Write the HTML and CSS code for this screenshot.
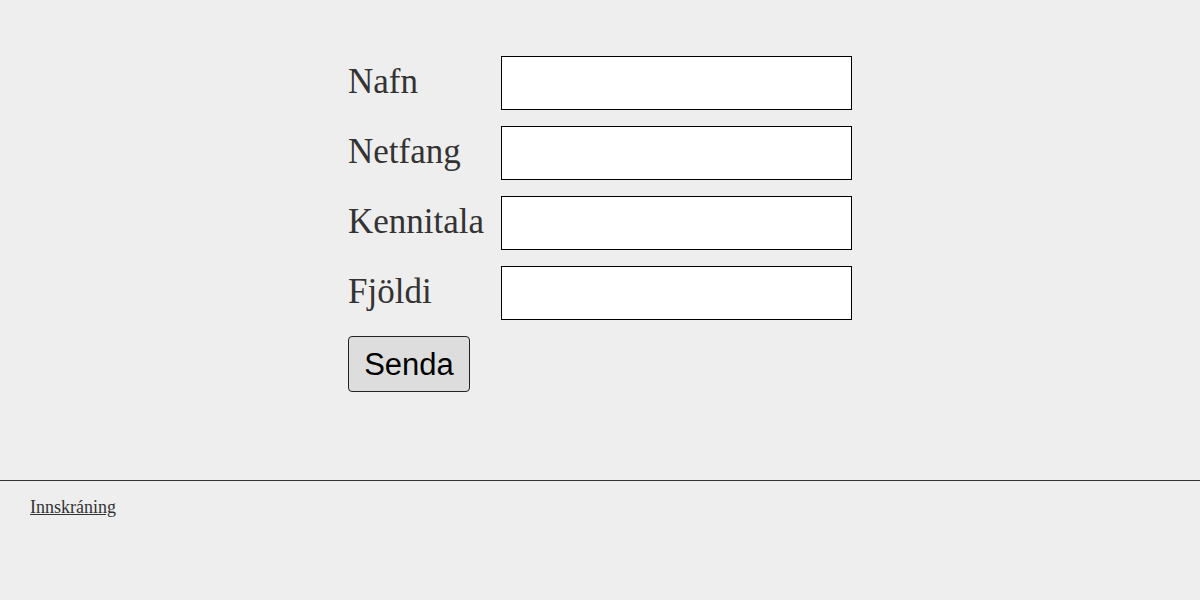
FILE: index.html
```html
<!DOCTYPE html>
<html lang="is">
<head>
<meta charset="utf-8">
<title>Skráning</title>
<link rel="stylesheet" href="styles.css">
</head>
<body>
<main class="main">
  <form class="form">
    <label class="label" for="nafn">Nafn</label>
    <input class="field" id="nafn" type="text">
    <label class="label" for="netfang">Netfang</label>
    <input class="field" id="netfang" type="email">
    <label class="label" for="kennitala">Kennitala</label>
    <input class="field" id="kennitala" type="text">
    <label class="label" for="fjoldi">Fjöldi</label>
    <input class="field" id="fjoldi" type="text">
    <div class="actions"><button class="button" type="button">Senda</button></div>
  </form>
</main>
<footer class="footer">
  <a class="link" href="#">Innskráning</a>
</footer>
</body>
</html>
```

FILE: styles.css
```css
html, body {
  margin: 0;
  background: #eee;
  color: #333;
  font-family: "Liberation Serif", "Times New Roman", serif;
}
.main {
  height: 481px;
  box-sizing: border-box;
  padding-top: 56px;
  border-bottom: 1px solid #333;
}
.form {
  width: 504px;
  margin: 0 auto;
  display: grid;
  grid-template-columns: 153px 351px;
  grid-auto-rows: 54px;
  row-gap: 16px;
  align-items: center;
}
.label {
  font-size: 35px;
  line-height: 40px;
  padding-bottom: 3px;
}
.field {
  box-sizing: border-box;
  width: 351px;
  height: 54px;
  margin: 0;
  border: 1px solid #000;
  background: #fff;
  font-size: 20px;
}
.actions {
  grid-column: 1 / 3;
  align-self: start;
}
.button {
  box-sizing: border-box;
  height: 56px;
  width: 122px;
  padding: 2px 0 0;
  margin: 0;
  font-family: "Liberation Sans", Arial, sans-serif;
  font-size: 31px;
  color: #000;
  background: #ddd;
  border: 1px solid #222;
  border-radius: 4px;
}
.footer {
  padding: 16px 30px;
}
.link {
  color: #333;
  font-size: 18px;
  line-height: 20px;
}
```
